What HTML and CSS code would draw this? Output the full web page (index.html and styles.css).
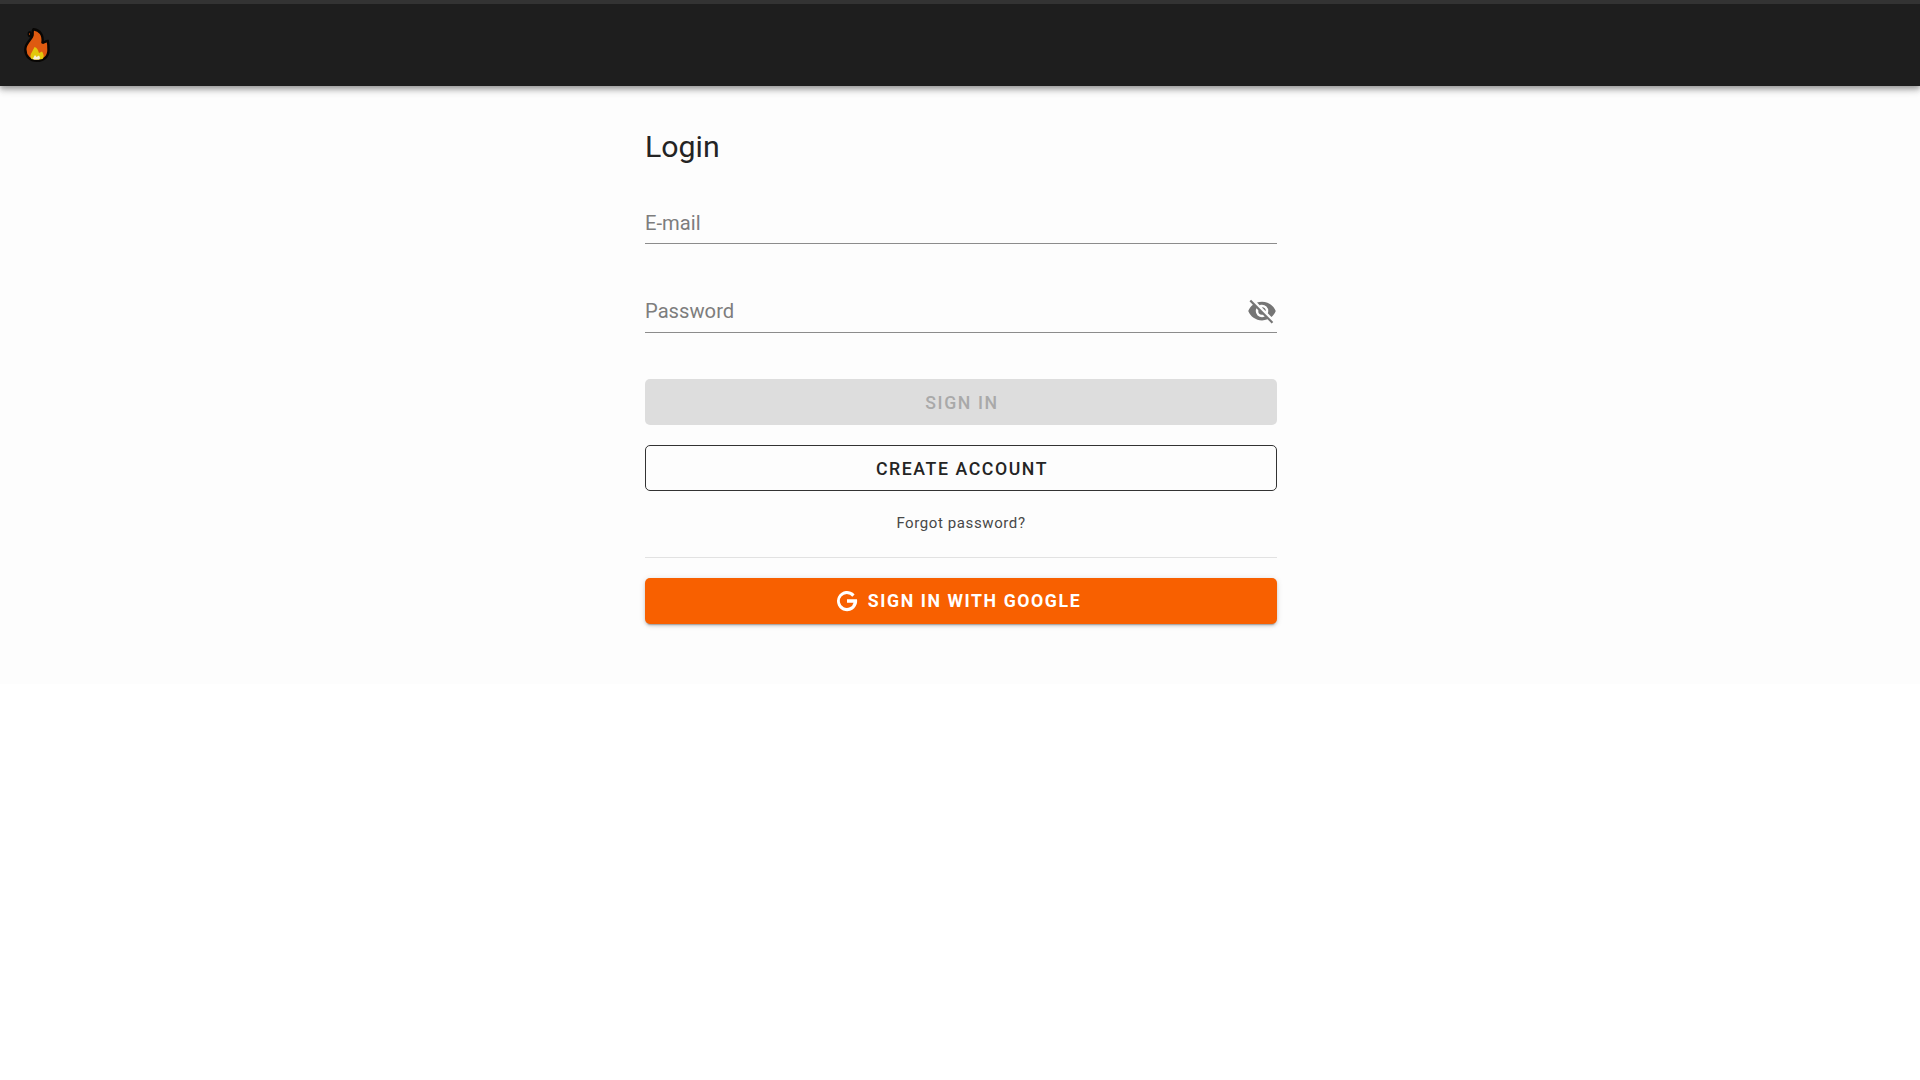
FILE: index.html
```html
<!DOCTYPE html>
<html lang="en">
<head>
<meta charset="utf-8">
<title>Login</title>
<link rel="stylesheet" href="styles.css">
</head>
<body>
<header class="app-bar">
  <svg class="logo" viewBox="0 0 28 36">
    <path d="M10.500 2.200C17 3 20.500 8 19.500 15.500C21 16.500 22 14 24.800 14C25.500 17 25.500 20 25.500 23C25.500 30 20.500 33.800 13.800 33.800C7 33.800 2.300 29 2.300 22.500C2.300 15.500 8.500 13 9.500 8.500C10 6 9 4 10.500 2.200Z" fill="#de5a10" stroke="#080604" stroke-width="2.400"/>
    <path d="M6.300 5C8.300 4.500 8.600 8 6.800 9.500C5 9 5 6 6.300 5Z" fill="#de5a10" stroke="#080604" stroke-width="1.800"/>
    <path d="M8.500 32C5.500 28.500 10 24 11.500 20C14 20.500 15 23 16 26L19 24.500C21.300 28 21 30.500 19.500 32C16 33 11 33 8.500 32Z" fill="#e2c80c"/>
    <path d="M10 31.500L12 28L13.500 30L16 28.500C17.500 30.500 17 32 16 32.600H12C11 32.500 10 32.300 10 31.500Z" fill="#f8f0d8"/>
  </svg>
</header>
<main class="login">
  <h1 class="title">Login</h1>
  <div class="field"><span>E-mail</span></div>
  <div class="field password"><span>Password</span>
    <svg class="eye" viewBox="0 0 24 24"><path d="M11.830 9L15 12.160V12A3 3 0 0 0 12 9H11.830M7.530 9.800L9.080 11.350C9.030 11.560 9 11.770 9 12A3 3 0 0 0 12 15C12.220 15 12.440 14.970 12.650 14.920L14.200 16.470C13.530 16.800 12.790 17 12 17A5 5 0 0 1 7 12C7 11.210 7.200 10.470 7.530 9.800M2 4.270L4.280 6.550L4.730 7C3.080 8.300 1.780 10 1 12C2.730 16.390 7 19.500 12 19.500C13.550 19.500 15.030 19.200 16.380 18.660L16.810 19.080L19.730 22L21 20.730L3.270 3M12 7A5 5 0 0 1 17 12C17 12.640 16.870 13.260 16.640 13.820L19.570 16.750C21.070 15.500 22.270 13.860 23 12C21.270 7.610 17 4.500 12 4.500C10.600 4.500 9.260 4.750 8 5.200L10.170 7.350C10.740 7.130 11.350 7 12 7Z"/></svg>
  </div>
  <button class="btn disabled" disabled>SIGN IN</button>
  <button class="btn outlined">CREATE ACCOUNT</button>
  <a class="forgot">Forgot password?</a>
  <hr class="divider">
  <button class="btn google">
    <svg class="g" viewBox="0 0 24 24"><path d="M20.300 4.800A11 11 0 1 0 22.900 10.200H12V13.800H19.200A7.600 7.600 0 1 1 17.800 7.300Z"/></svg>SIGN IN WITH GOOGLE</button>
</main>
</body>
</html>
```
FILE: styles.css
```css
* { box-sizing: border-box; }
body { margin: 0; min-height: 1080px; background: linear-gradient(#fdfdfd 684px, #fff 684px); font-family: Roboto, sans-serif; color: #242424; }
.app-bar { height: 86px; border-top: 4px solid #333; background: #1e1e1e; display: flex; align-items: center; padding-left: 23px; box-shadow: 0 2px 5px rgba(0,0,0,.25), 0 5px 6px rgba(0,0,0,.14), 0 1px 12px rgba(0,0,0,.12); }
.logo { width: 28px; height: 36px; }
.login { width: 632px; margin: 0 auto 0 645px; padding-top: 40px; display: flex; flex-direction: column; }
.title { margin: 0; height: 40px; line-height: 42px; font-size: 30.3px; font-weight: 400; }
.field { height: 40px; margin-top: 38px; border-bottom: 1px solid #8c8c8c; font-size: 20.2px; line-height: 38px; color: #7d7d7d; display: flex; justify-content: space-between; }
.password { margin-top: 49px; line-height: 36px; }
.eye { width: 30px; height: 30px; margin-top: 3px; fill: #757575; }
.btn { display: flex; align-items: center; justify-content: center; height: 46px; flex: none; padding: 0; border: 0; border-radius: 5px; font: 500 17.7px Roboto, sans-serif; letter-spacing: 1.58px; }
.disabled { margin-top: 46px; padding: 2px 0 0 2px; background: #ddd; color: #a9a9a9; }
.outlined { margin-top: 20px; padding: 1px 0 0 2px; border: 1px solid #333; background: transparent; color: #242424; }
.forgot { margin-top: 20px; height: 24px; line-height: 24px; text-align: center; font-size: 15px; letter-spacing: .6px; color: #484848; }
.divider { width: 100%; height: 1px; border: 0; margin: 22px 0 20px; background: #e2e2e2; }
.google { padding-right: 5px; background: #f86000; color: #fff; font-weight: 700; box-shadow: 0 3px 1px -2px rgba(0,0,0,.2), 0 2px 3px rgba(0,0,0,.14), 0 1px 6px rgba(0,0,0,.12); }
.g { width: 22px; height: 22px; margin-right: 10px; fill: currentColor; }
```
